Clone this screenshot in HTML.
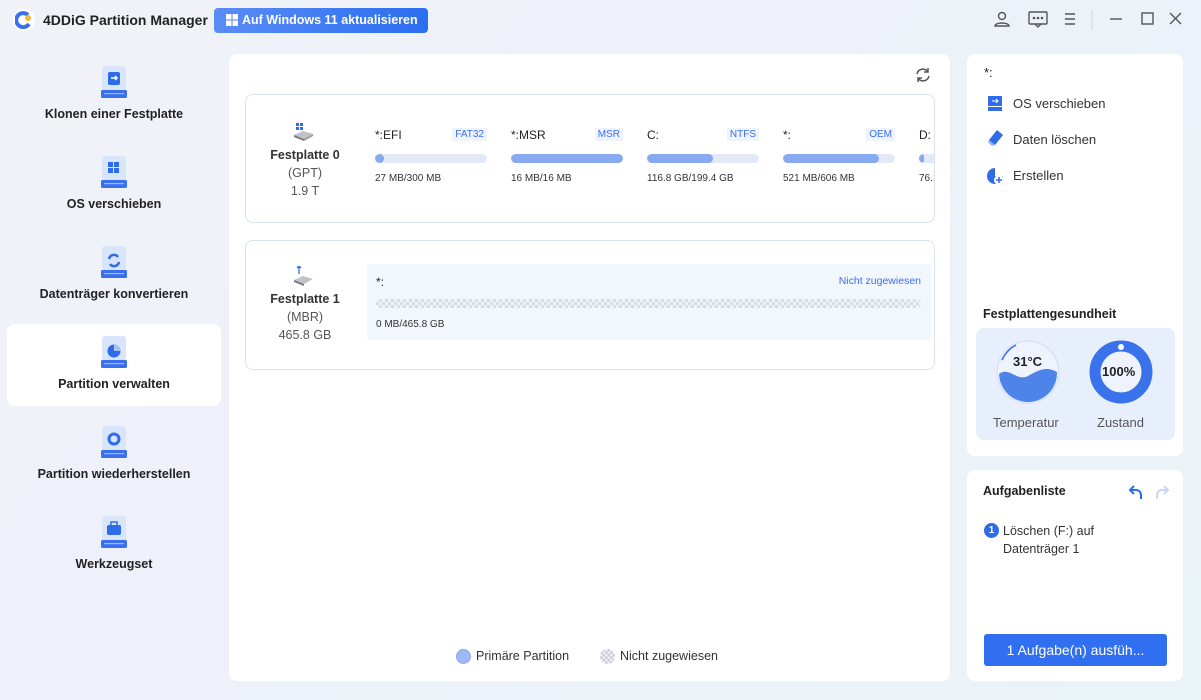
<!DOCTYPE html>
<html><head><meta charset="utf-8"><style>
*{box-sizing:border-box;margin:0;padding:0}
body{width:1201px;height:700px;overflow:hidden;font-family:"Liberation Sans",sans-serif;background:linear-gradient(135deg,#f0f2f8 0%,#eef1f9 40%,#eaf3f8 100%);position:relative;color:#222}
.abs{position:absolute}
.nav{position:absolute;left:7px;width:214px;height:82px;text-align:center;font-size:12.5px;font-weight:bold;color:#222}
.nav .lb{position:absolute;left:0;right:0;top:53px}
.card{position:absolute;background:#fff;border-radius:8px}
.part{position:absolute;top:128px;width:112px;font-size:12px;color:#222}
.part .t{position:absolute;right:0;top:0;font-size:10px;color:#3a6ff0;background:#eef3fc;padding:1px 3px}
.part .bar{position:absolute;left:0;top:26px;width:112px;height:9px;border-radius:5px;background:#e3e9f6;overflow:hidden}
.part .bar i{display:block;height:100%;background:#87a9ef;border-radius:5px}
.part .s{position:absolute;left:0;top:45px;font-size:10px;color:#333}
.menu{position:absolute;left:1013px;font-size:13px;color:#333}
</style></head><body>
<div class="abs" style="left:13px;top:9px;width:22px;height:22px;border-radius:50%;background:#fff"></div>
<svg class="abs" style="left:15px;top:11px" width="18" height="18" viewBox="0 0 18 18"><path d="M13 4A7 7 0 1 0 14 13" stroke="#3a6ff0" stroke-width="4" fill="none"/><circle cx="13" cy="7" r="3" fill="#f5b731"/></svg>
<div class="abs" style="left:43px;top:12px;font-size:14px;font-weight:bold;color:#222">4DDiG Partition Manager</div>
<div class="abs" style="left:214px;top:8px;width:214px;height:25px;border-radius:4px;background:linear-gradient(90deg,#5a8cf5,#2b6ef0);color:#fff;font-size:12.5px;font-weight:bold;line-height:25px;padding-left:28px">Auf Windows 11 aktualisieren</div>
<svg class="abs" style="left:226px;top:14px" width="12" height="12"><rect width="5.5" height="5.5" fill="#fff"/><rect x="6.5" width="5.5" height="5.5" fill="#fff"/><rect y="6.5" width="5.5" height="5.5" fill="#fff"/><rect x="6.5" y="6.5" width="5.5" height="5.5" fill="#fff"/></svg>
<svg class="abs" style="left:990px;top:8px" width="200" height="24" fill="none" stroke="#555" stroke-width="1.4">
<circle cx="12" cy="8" r="3.5"/><path d="M5 18c0-4 14-4 14 0z"/>
<rect x="39" y="4" width="18" height="12" rx="1"/><path d="M45 16l3 3 3-3"/><circle cx="44" cy="10" r=".6" fill="#555"/><circle cx="48" cy="10" r=".6" fill="#555"/><circle cx="52" cy="10" r=".6" fill="#555"/>
<path d="M75 6h10M75 11h10M75 16h10"/><path d="M102 2v20" stroke="#ddd"/>
<path d="M120 11h12"/><rect x="152" y="5" width="11" height="11"/><path d="M180 5l11 11M191 5l-11 11"/></svg>

<div class="nav" style="top:54px"><div class="lb">Klonen einer Festplatte</div></div>
<div class="nav" style="top:144px"><div class="lb">OS verschieben</div></div>
<div class="nav" style="top:234px"><div class="lb">Datenträger konvertieren</div></div>
<div class="nav" style="top:324px;background:#fff;border-radius:8px"><div class="lb">Partition verwalten</div></div>
<div class="nav" style="top:414px"><div class="lb">Partition wiederherstellen</div></div>
<div class="nav" style="top:504px"><div class="lb">Werkzeugset</div></div>
<svg class="abs" style="left:100px;top:66px" width="28" height="500">
<g id="d"><rect x="2" y="0" width="24" height="28" rx="3" fill="#d9e5fb"/><rect x="1" y="24" width="26" height="8" rx="1.5" fill="#3a6ff0"/><rect x="4" y="27" width="20" height="1.2" fill="#9fbaf5"/></g>
<rect x="8" y="6" width="12" height="13" rx="2" fill="#2f6ce8"/><path d="M11 12h6M15 10l2 2-2 2" stroke="#fff" stroke-width="1.5" fill="none"/>
<use href="#d" y="90"/><rect x="8" y="96" width="5" height="5" fill="#2f6ce8"/><rect x="14" y="96" width="5" height="5" fill="#2f6ce8"/><rect x="8" y="102" width="5" height="5" fill="#2f6ce8"/><rect x="14" y="102" width="5" height="5" fill="#2f6ce8"/>
<use href="#d" y="180"/><path d="M9 193a5 5 0 0 1 9-2M19 196a5 5 0 0 1-9 2" stroke="#2f6ce8" stroke-width="2.5" fill="none"/>
<use href="#d" y="270"/><circle cx="14" cy="285" r="6.5" fill="#2f6ce8"/><path d="M14 278.5v6.5h6.5a6.5 6.5 0 0 0-6.5-6.5z" fill="#a9c2f5"/>
<use href="#d" y="360"/><circle cx="14" cy="373" r="5" stroke="#2f6ce8" stroke-width="3" fill="none"/>
<use href="#d" y="450"/><rect x="7" y="459" width="14" height="10" rx="2" fill="#2f6ce8"/><rect x="11" y="456" width="6" height="4" fill="none" stroke="#2f6ce8" stroke-width="1.5"/>
</svg>

<div class="card" style="left:229px;top:54px;width:721px;height:627px"></div>
<svg class="abs" style="left:914px;top:66px" width="18" height="18" fill="none" stroke="#555" stroke-width="1.5"><path d="M3 8a6 6 0 0 1 11-2M15 10a6 6 0 0 1-11 2"/><path d="M14 2v4h-4M4 16v-4h4"/></svg>
<div class="abs" style="left:245px;top:94px;width:690px;height:129px;border:1px solid #d8e3f3;border-radius:8px;background:#fff;overflow:hidden">
<svg class="abs" style="left:47px;top:28px" width="22" height="18"><rect x="3" y="0" width="3" height="3" fill="#2f6ce8"/><rect x="7" y="0" width="3" height="3" fill="#2f6ce8"/><rect x="3" y="4" width="3" height="3" fill="#2f6ce8"/><rect x="7" y="4" width="3" height="3" fill="#2f6ce8"/><path d="M1 12l9-4 10 3-9 5z" fill="#bcc3ce"/><path d="M1 12l10 4v2L1 14z" fill="#777"/><path d="M11 16l9-5v2l-9 5z" fill="#999"/></svg>
<div class="abs" style="left:0;width:118px;top:51px;text-align:center;font-size:12.5px;line-height:18px;color:#555"><b style="color:#333">Festplatte 0</b><br>(GPT)<br>1.9 T</div>
<div class="part" style="left:129px;top:33px">*:EFI<span class="t">FAT32</span><div class="bar"><i style="width:9px"></i></div><div class="s">27 MB/300 MB</div></div>
<div class="part" style="left:265px;top:33px">*:MSR<span class="t">MSR</span><div class="bar"><i style="width:112px"></i></div><div class="s">16 MB/16 MB</div></div>
<div class="part" style="left:401px;top:33px">C:<span class="t">NTFS</span><div class="bar"><i style="width:66px"></i></div><div class="s">116.8 GB/199.4 GB</div></div>
<div class="part" style="left:537px;top:33px">*:<span class="t">OEM</span><div class="bar"><i style="width:96px"></i></div><div class="s">521 MB/606 MB</div></div>
<div class="part" style="left:673px;top:33px">D:<div class="bar"><i style="width:5px"></i></div><div class="s">76.1</div></div>
</div>
<div class="abs" style="left:245px;top:240px;width:690px;height:130px;border:1px solid #d8e3f3;border-radius:8px;background:#fff">
<svg class="abs" style="left:47px;top:25px" width="22" height="20"><path d="M6 0v8M4 2l2-2 2 2" stroke="#2f6ce8" stroke-width="1.3" fill="none"/><path d="M1 14l9-4 10 3-9 5z" fill="#bcc3ce"/><path d="M1 14l10 4v2L1 16z" fill="#777"/></svg>
<div class="abs" style="left:0;width:118px;top:49px;text-align:center;font-size:12.5px;line-height:18px;color:#555"><b style="color:#333">Festplatte 1</b><br>(MBR)<br>465.8 GB</div>
<div class="abs" style="left:121px;top:23px;width:564px;height:76px;background:#f2f6fd;border-radius:3px">
<div class="abs" style="left:9px;top:11px;font-size:12px">*:</div>
<div class="abs" style="right:10px;top:11px;font-size:10.5px;color:#3a6ff0">Nicht zugewiesen</div>
<div class="abs" style="left:9px;top:35px;width:545px;height:9px;border-radius:4px;background:repeating-conic-gradient(#d8dce3 0 25%,#f2f3f6 0 50%) 0 0/6px 6px"></div>
<div class="abs" style="left:9px;top:55px;font-size:10px;color:#333">0 MB/465.8 GB</div>
</div></div>
<div class="abs" style="left:456px;top:649px;width:15px;height:15px;border-radius:50%;background:#9db8f4;border:1px solid #8aa8ee"></div>
<div class="abs" style="left:476px;top:649px;font-size:12.5px;color:#333">Primäre Partition</div>
<div class="abs" style="left:600px;top:649px;width:15px;height:15px;border-radius:50%;background:repeating-conic-gradient(#c8ccd3 0 25%,#f0f1f4 0 50%) 0 0/5px 5px"></div>
<div class="abs" style="left:620px;top:649px;font-size:12.5px;color:#333">Nicht zugewiesen</div>

<div class="card" style="left:967px;top:54px;width:216px;height:402px"></div>
<div class="abs" style="left:984px;top:65px;font-size:13px">*:</div>
<svg class="abs" style="left:986px;top:94px" width="20" height="100">
<rect x="2" y="2" width="14" height="10" fill="#2f6ce8"/><rect x="2" y="13" width="14" height="4" fill="#2f6ce8"/><path d="M6 7h6M10 5l2 2-2 2" stroke="#fff" fill="none"/>
<path d="M3 46l8-10 6 5-8 10z" fill="#2f6ce8"/><path d="M3 46l6 5-3 1-4-4z" fill="#8fb0f3"/>
<path d="M9 74a8 8 0 1 0 8 8h-8z" fill="#2f6ce8"/><circle cx="13" cy="86" r="5" fill="#fff"/><path d="M13 83v6M10 86h6" stroke="#2f6ce8" stroke-width="1.5"/></svg>
<div class="menu" style="top:96px">OS verschieben</div>
<div class="menu" style="top:132px">Daten löschen</div>
<div class="menu" style="top:168px">Erstellen</div>
<div class="abs" style="left:983px;top:307px;font-size:12.5px;font-weight:bold">Festplattengesundheit</div>
<div class="abs" style="left:976px;top:328px;width:199px;height:112px;background:#e8effc;border-radius:8px"></div>
<svg class="abs" style="left:990px;top:336px" width="170" height="70">
<circle cx="38" cy="36" r="31" fill="#eef3fd" stroke="#dbe5f7" stroke-width="2"/>
<path d="M9 38c10-8 18 8 29 2s18-10 29-4a29 29 0 0 1-58 2z" fill="#4e83ea"/>
<path d="M12 24a31 31 0 0 1 14-15" stroke="#3a6ff0" stroke-width="1.5" fill="none"/>
<circle cx="131" cy="36" r="26" fill="none" stroke="#3a72ec" stroke-width="11"/>
<circle cx="131" cy="36" r="20" fill="#eef3fd"/><circle cx="131" cy="11" r="3" fill="#fff"/>
</svg>
<div class="abs" style="left:1013px;top:354px;font-size:13px;font-weight:bold">31°C</div>
<div class="abs" style="left:1102px;top:364px;font-size:13px;font-weight:bold">100%</div>
<div class="abs" style="left:993px;top:415px;font-size:13px;color:#555">Temperatur</div>
<div class="abs" style="left:1097px;top:415px;font-size:13px;color:#555">Zustand</div>

<div class="card" style="left:967px;top:470px;width:216px;height:211px"></div>
<div class="abs" style="left:983px;top:484px;font-size:12.5px;font-weight:bold">Aufgabenliste</div>
<svg class="abs" style="left:1126px;top:484px" width="46" height="16" fill="none" stroke-width="2"><path d="M4 6h6a5 5 0 0 1 5 5v4M8 2L4 6l4 4" stroke="#2f6ce8"/><path d="M42 6h-6a5 5 0 0 0-5 5v4M38 2l4 4-4 4" stroke="#c9d7f5"/></svg>
<div class="abs" style="left:984px;top:523px;width:15px;height:15px;border-radius:50%;background:#2f6ce8;color:#fff;font-size:10px;text-align:center;line-height:15px;font-weight:bold">1</div>
<div class="abs" style="left:1003px;top:522px;font-size:12.5px;line-height:18px;color:#333">Löschen (F:) auf<br>Datenträger 1</div>
<div class="abs" style="left:984px;top:634px;width:183px;height:32px;background:#2f6ff0;border-radius:3px;color:#fff;font-size:14px;text-align:center;line-height:32px">1 Aufgabe(n) ausfüh...</div>
</body></html>
